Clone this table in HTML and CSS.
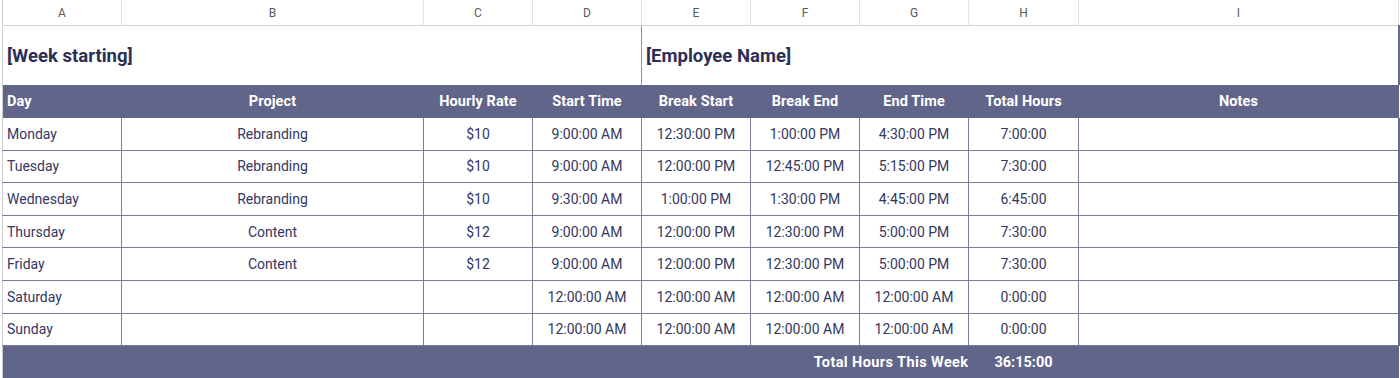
FILE: index.html
```html
<!DOCTYPE html>
<html>
<head>
<meta charset="utf-8">
<link rel="stylesheet" href="styles.css">
</head>
<body>
<div class="sheet">
<table class="grid">
<colgroup>
<col class="c-a"><col class="c-b"><col class="c-c"><col class="c-d"><col class="c-e"><col class="c-f"><col class="c-g"><col class="c-h"><col class="c-i">
</colgroup>
<thead>
<tr class="letters"><th>A</th><th>B</th><th>C</th><th>D</th><th>E</th><th>F</th><th>G</th><th>H</th><th>I</th></tr>
</thead>
<tbody>
<tr class="titles"><td colspan="4" class="t-left">[Week starting]</td><td colspan="5" class="t-right">[Employee Name]</td></tr>
<tr class="head"><th class="left">Day</th><th>Project</th><th>Hourly Rate</th><th>Start Time</th><th>Break Start</th><th>Break End</th><th>End Time</th><th>Total Hours</th><th class="last">Notes</th></tr>
<tr class="row"><td class="left">Monday</td><td>Rebranding</td><td>$10</td><td>9:00:00 AM</td><td>12:30:00 PM</td><td>1:00:00 PM</td><td>4:30:00 PM</td><td>7:00:00</td><td class="last"></td></tr>
<tr class="row"><td class="left">Tuesday</td><td>Rebranding</td><td>$10</td><td>9:00:00 AM</td><td>12:00:00 PM</td><td>12:45:00 PM</td><td>5:15:00 PM</td><td>7:30:00</td><td class="last"></td></tr>
<tr class="row"><td class="left">Wednesday</td><td>Rebranding</td><td>$10</td><td>9:30:00 AM</td><td>1:00:00 PM</td><td>1:30:00 PM</td><td>4:45:00 PM</td><td>6:45:00</td><td class="last"></td></tr>
<tr class="row"><td class="left">Thursday</td><td>Content</td><td>$12</td><td>9:00:00 AM</td><td>12:00:00 PM</td><td>12:30:00 PM</td><td>5:00:00 PM</td><td>7:30:00</td><td class="last"></td></tr>
<tr class="row"><td class="left">Friday</td><td>Content</td><td>$12</td><td>9:00:00 AM</td><td>12:00:00 PM</td><td>12:30:00 PM</td><td>5:00:00 PM</td><td>7:30:00</td><td class="last"></td></tr>
<tr class="row"><td class="left">Saturday</td><td></td><td></td><td>12:00:00 AM</td><td>12:00:00 AM</td><td>12:00:00 AM</td><td>12:00:00 AM</td><td>0:00:00</td><td class="last"></td></tr>
<tr class="row"><td class="left">Sunday</td><td></td><td></td><td>12:00:00 AM</td><td>12:00:00 AM</td><td>12:00:00 AM</td><td>12:00:00 AM</td><td>0:00:00</td><td class="last"></td></tr>
<tr class="foot"><td colspan="7" class="total-label">Total Hours This Week</td><td>36:15:00</td><td class="last"></td></tr>
</tbody>
</table>
</div>
</body>
</html>
```
FILE: styles.css
```css
html, body {
  margin: 0;
  padding: 0;
  background: #ffffff;
}
.sheet {
  width: 1400px;
  height: 378px;
  overflow: hidden;
  padding-left: 2px;
  box-sizing: border-box;
}
.grid {
  border-collapse: collapse;
  table-layout: fixed;
  width: 1397px;
  border-left: 1px solid #cfcfcf;
  font-family: Roboto, "Liberation Sans", sans-serif;
  font-size: 14px;
  color: #34375e;
}
.c-a { width: 119px; }
.c-b { width: 302px; }
.c-c { width: 109px; }
.c-d { width: 109px; }
.c-e { width: 109px; }
.c-f { width: 109px; }
.c-g { width: 109px; }
.c-h { width: 110px; }
.c-i { width: 320px; }

td, th {
  padding: 0;
  text-align: center;
  white-space: nowrap;
  overflow: hidden;
}
.letters th {
  height: 25px;
  font-family: Roboto, "Liberation Sans", sans-serif;
  font-weight: 400;
  font-size: 12px;
  color: #5a5a5a;
  border-right: 1px solid #e1e1e1;
  border-bottom: 1px solid #d2d2d2;
  vertical-align: middle;
}
.titles td {
  height: 59px;
  font-size: 18.5px;
  font-weight: 700;
  color: #2c2f55;
  text-align: left;
  padding-left: 4px;
}
.titles .t-left {
  border-right: 1px solid #8c8ea6;
}
.titles .t-right {
  border-right: 2px solid #6a6c8a;
}
.head th {
  height: 33px;
  background: #62658a;
  color: #ffffff;
  font-weight: 700;
  font-size: 14.5px;
  letter-spacing: 0.1px;
}
.head th.left {
  text-align: left;
  padding-left: 4px;
}
.row td {
  height: 31.6px;
  border-right: 1px solid #7b7d9a;
  border-bottom: 1px solid #7b7d9a;
}
.row td.left {
  text-align: left;
  padding-left: 4px;
}
.row td.last {
  border-right: 2px solid #6a6c8a;
}
.foot td {
  height: 33px;
  background: #62658a;
  color: #ffffff;
  font-weight: 700;
  font-size: 14.5px;
}
.foot .total-label {
  text-align: right;
  padding-right: 0;
  letter-spacing: 0.4px;
}
```
